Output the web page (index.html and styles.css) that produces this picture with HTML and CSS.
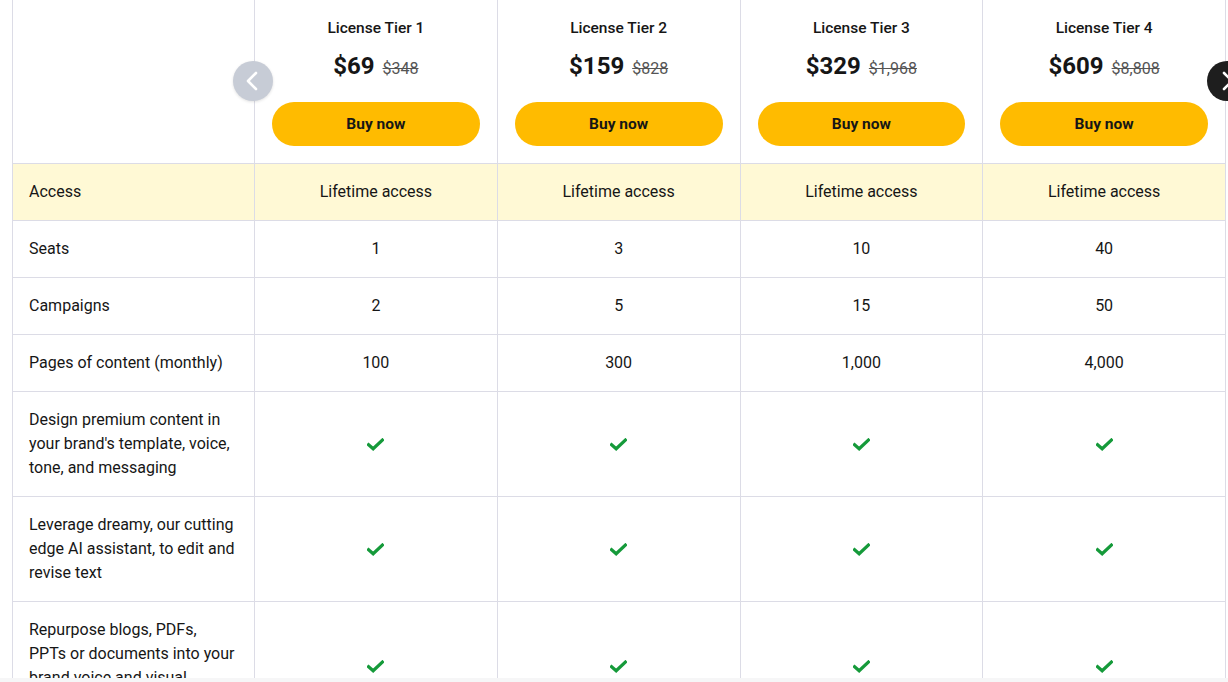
FILE: index.html
```html
<!DOCTYPE html>
<html lang="en">
<head>
<meta charset="utf-8">
<title>Pricing</title>
<link rel="stylesheet" href="styles.css">
</head>
<body>
<div class="viewport">
  <div class="wrap">
    <table class="plans">
      <colgroup>
        <col class="c-label"><col><col><col><col>
      </colgroup>
      <thead>
        <tr>
          <th class="blank"></th>
          <th><div class="tier">License Tier 1</div><div class="price"><span class="now">$69</span><s class="old">$348</s></div><button class="buy">Buy now</button></th>
          <th><div class="tier">License Tier 2</div><div class="price"><span class="now">$159</span><s class="old">$828</s></div><button class="buy">Buy now</button></th>
          <th><div class="tier">License Tier 3</div><div class="price"><span class="now">$329</span><s class="old">$1,968</s></div><button class="buy">Buy now</button></th>
          <th><div class="tier">License Tier 4</div><div class="price"><span class="now">$609</span><s class="old">$8,808</s></div><button class="buy">Buy now</button></th>
        </tr>
      </thead>
      <tbody>
        <tr class="hl"><td>Access</td><td>Lifetime access</td><td>Lifetime access</td><td>Lifetime access</td><td>Lifetime access</td></tr>
        <tr><td>Seats</td><td>1</td><td>3</td><td>10</td><td>40</td></tr>
        <tr><td>Campaigns</td><td>2</td><td>5</td><td>15</td><td>50</td></tr>
        <tr><td>Pages of content (monthly)</td><td>100</td><td>300</td><td>1,000</td><td>4,000</td></tr>
        <tr class="tall"><td>Design premium content in your brand's template, voice, tone, and messaging</td>
          <td><svg class="chk" viewBox="0 0 16 12"><path d="M1.5 6.2 L5.8 10 L14.5 1.8"/></svg></td>
          <td><svg class="chk" viewBox="0 0 16 12"><path d="M1.5 6.2 L5.8 10 L14.5 1.8"/></svg></td>
          <td><svg class="chk" viewBox="0 0 16 12"><path d="M1.5 6.2 L5.8 10 L14.5 1.8"/></svg></td>
          <td><svg class="chk" viewBox="0 0 16 12"><path d="M1.5 6.2 L5.8 10 L14.5 1.8"/></svg></td></tr>
        <tr class="tall"><td>Leverage dreamy, our cutting edge AI assistant, to edit and revise text</td>
          <td><svg class="chk" viewBox="0 0 16 12"><path d="M1.5 6.2 L5.8 10 L14.5 1.8"/></svg></td>
          <td><svg class="chk" viewBox="0 0 16 12"><path d="M1.5 6.2 L5.8 10 L14.5 1.8"/></svg></td>
          <td><svg class="chk" viewBox="0 0 16 12"><path d="M1.5 6.2 L5.8 10 L14.5 1.8"/></svg></td>
          <td><svg class="chk" viewBox="0 0 16 12"><path d="M1.5 6.2 L5.8 10 L14.5 1.8"/></svg></td></tr>
        <tr class="tall"><td>Repurpose blogs, PDFs, PPTs or documents into your brand voice and visual identity</td>
          <td><svg class="chk" viewBox="0 0 16 12"><path d="M1.5 6.2 L5.8 10 L14.5 1.8"/></svg></td>
          <td><svg class="chk" viewBox="0 0 16 12"><path d="M1.5 6.2 L5.8 10 L14.5 1.8"/></svg></td>
          <td><svg class="chk" viewBox="0 0 16 12"><path d="M1.5 6.2 L5.8 10 L14.5 1.8"/></svg></td>
          <td><svg class="chk" viewBox="0 0 16 12"><path d="M1.5 6.2 L5.8 10 L14.5 1.8"/></svg></td></tr>
      </tbody>
    </table>
    <button class="nav prev" aria-label="Previous"><svg viewBox="0 0 40 40"><path d="M23 12 L15 20 L23 28"/></svg></button>
    <button class="nav next" aria-label="Next"><svg viewBox="0 0 40 40"><path d="M17 12 L25 20 L17 28"/></svg></button>
  </div>
</div>
</body>
</html>
```

FILE: styles.css
```css
* { box-sizing: border-box; }
html, body {
  margin: 0;
  padding: 0;
  background: #f6f6f7;
  font-family: Roboto, "Liberation Sans", Arial, sans-serif;
  color: #161616;
}
.viewport {
  height: 678px;
  overflow: hidden;
  background: #ffffff;
}
.wrap {
  position: relative;
  margin-left: 12px;
  width: 1214px;
}
.plans {
  width: 1214px;
  table-layout: fixed;
  border-collapse: collapse;
}
.c-label { width: 242px; }
.plans th, .plans td {
  border: 1px solid #dcdce6;
}
.plans thead th {
  border-top: none;
  padding: 18px 17px 0;
  font-weight: 400;
  text-align: center;
  vertical-align: top;
  height: 163px;
}
.tier {
  font-size: 15.5px;
  font-weight: 500;
  line-height: 20px;
  color: #161616;
}
.price {
  margin-top: 14px;
  line-height: 28px;
  display: flex;
  justify-content: center;
  align-items: baseline;
  gap: 8px;
}
.now {
  font-size: 24px;
  font-weight: 700;
  color: #161616;
}
.old {
  font-size: 16px;
  color: #555;
  text-decoration: line-through;
}
.buy {
  display: block;
  width: 100%;
  margin-top: 19px;
  height: 44px;
  border: none;
  border-radius: 22px;
  background: #ffbb00;
  font-family: Roboto, "Liberation Sans", Arial, sans-serif;
  font-size: 15.5px;
  font-weight: 700;
  color: #161616;
  cursor: pointer;
}
.plans tbody td {
  height: 57px;
  padding: 0 16px;
  font-size: 16px;
  line-height: 24px;
  text-align: center;
  vertical-align: middle;
  color: #161616;
}
.plans tbody td:first-child {
  text-align: left;
  padding-right: 18px;
}
.plans tbody tr.hl td {
  background: #fff9d5;
}
.plans tbody tr.tall td {
  height: 105px;
  padding-top: 16px;
  padding-bottom: 16px;
}
.chk {
  width: 17px;
  height: 13px;
  display: inline-block;
  vertical-align: middle;
}
.chk path {
  fill: none;
  stroke: #159a3a;
  stroke-width: 3;
  stroke-linecap: square;
}
.nav {
  position: absolute;
  top: 61px;
  width: 40px;
  height: 40px;
  border-radius: 50%;
  border: none;
  padding: 0;
  cursor: pointer;
}
.nav svg { width: 40px; height: 40px; display: block; }
.nav path {
  fill: none;
  stroke: #ffffff;
  stroke-width: 2.6;
  stroke-linecap: round;
  stroke-linejoin: round;
}
.prev {
  left: 221px;
  background: #c7ccd6;
  box-shadow: 0 1px 3px rgba(0,0,0,0.12);
}
.next {
  left: 1195px;
  background: #1e1e1e;
}
```
